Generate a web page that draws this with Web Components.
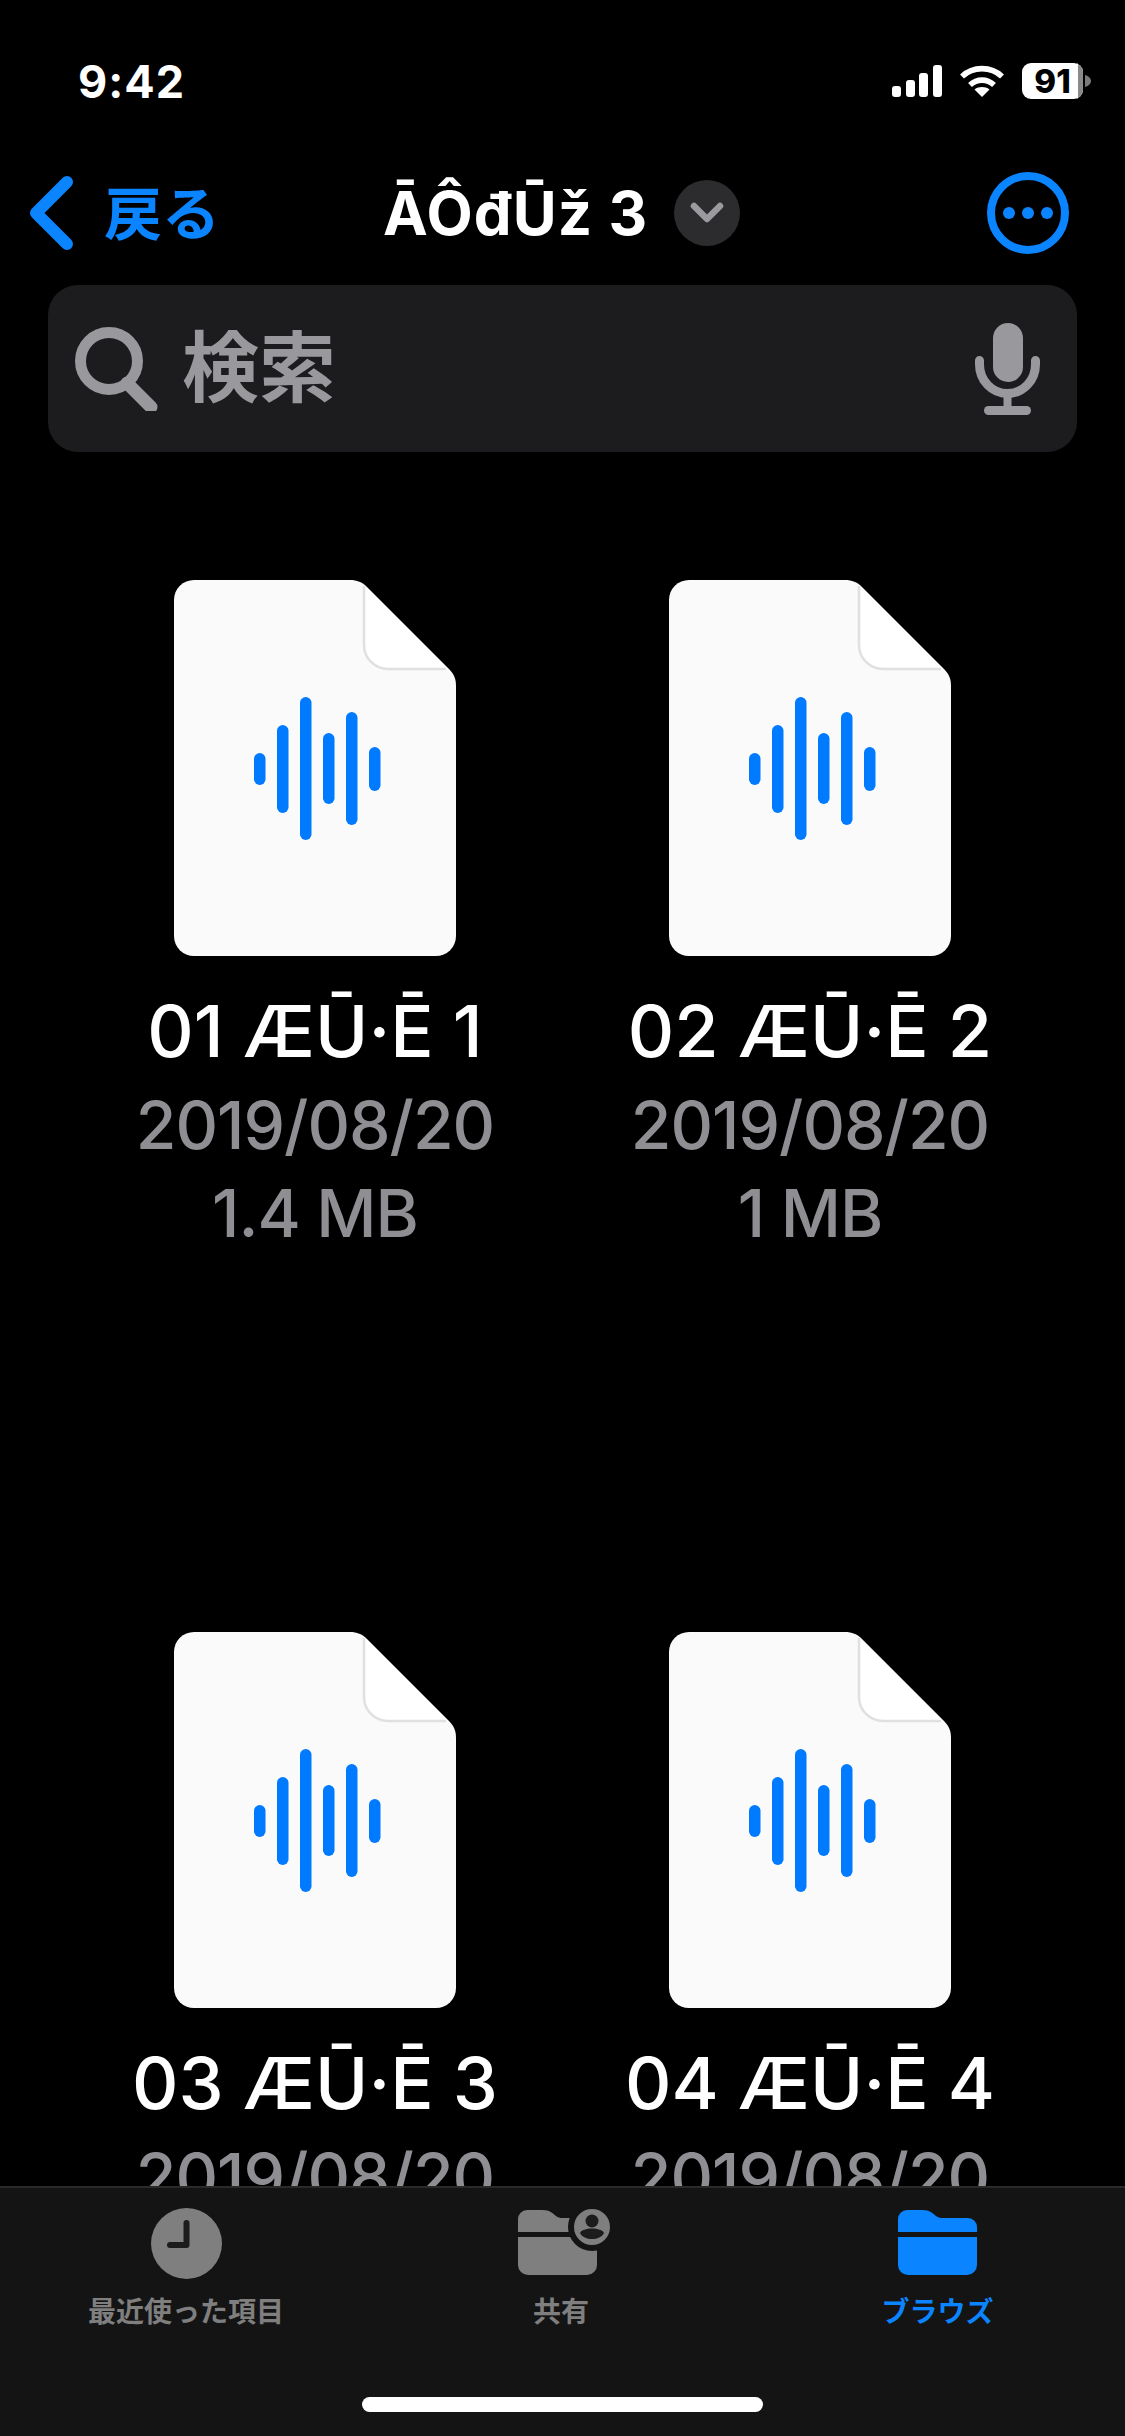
<!DOCTYPE html>
<html lang="ja">
<head>
<meta charset="UTF-8">
<title>Files</title>
<style>
  html, body { margin: 0; background: #000; }
</style>
</head>
<body>
<files-app>
  <status-bar slot="status" time="9:42" battery="91"></status-bar>
  <nav-bar slot="nav" back="戻る" heading="ĀÔđŪž 3"></nav-bar>
  <search-field slot="search" placeholder="検索"></search-field>
  <file-tile slot="files" name="01 ÆŪ·Ē 1" date="2019/08/20" size="1.4 MB"></file-tile>
  <file-tile slot="files" name="02 ÆŪ·Ē 2" date="2019/08/20" size="1 MB"></file-tile>
  <file-tile slot="files" name="03 ÆŪ·Ē 3" date="2019/08/20"></file-tile>
  <file-tile slot="files" name="04 ÆŪ·Ē 4" date="2019/08/20"></file-tile>
  <tab-bar slot="tabs"></tab-bar>
</files-app>

<script>
const FONT = `Inter, "Noto Sans CJK JP", sans-serif`;
const BLUE = '#0a84ff';

class FilesApp extends HTMLElement {
  constructor() {
    super();
    this.attachShadow({ mode: 'open' }).innerHTML = `
    <style>
      :host { display: flex; flex-direction: column; width: 1125px; height: 2436px; overflow: hidden; background: #000; font-family: ${FONT}; }
      .files { display: grid; flex: 1; min-height: 0; overflow: hidden; align-content: start;
        grid-template-columns: 495px 495px; grid-auto-rows: 1052px; padding: 128px 0 0 135px; }
    </style>
    <slot name="status"></slot>
    <slot name="nav"></slot>
    <slot name="search"></slot>
    <div class="files"><slot name="files"></slot></div>
    <slot name="tabs"></slot>`;
  }
}

class StatusBar extends HTMLElement {
  connectedCallback() {
    this.attachShadow({ mode: 'open' }).innerHTML = `
    <style>
      :host { display: flex; align-items: center; justify-content: space-between; height: 162px; box-sizing: border-box; padding: 0 34px 0 78px; color: #fff; }
      .time { font-size: 45px; font-weight: 700; letter-spacing: 1px; }
      .right { display: flex; align-items: center; gap: 17px; }
      .battery { position: relative; width: 69px; height: 36px; }
      svg { display: block; }
      .level { position: absolute; left: 0; top: 0; width: 61px; height: 36px; text-align: center; line-height: 37px; font-size: 33px; font-weight: 800; color: #000; }
    </style>
    <span class="time">${this.getAttribute('time')}</span>
    <div class="right">
      <svg width="50" height="32" viewBox="0 0 50 32" fill="#fff">
        <rect x="0" y="21" width="9" height="11" rx="3"/><rect x="14" y="15" width="9" height="17" rx="3"/>
        <rect x="27" y="8" width="9" height="24" rx="3"/><rect x="41" y="0" width="9" height="32" rx="3"/>
      </svg>
      <svg width="46" height="33" viewBox="0 0 46 33" fill="none" stroke="#fff" stroke-width="5.6">
        <path d="M3 11.500C14 1 32 1 43 11.500"/><path d="M11 20c7-6.500 17-6.500 24 0"/>
        <path d="M15.500 24.500 23 32l7.500-7.500c-4.500-3.200-10.500-3.200-15 0Z" fill="#fff" stroke="none"/>
      </svg>
      <div class="battery">
        <svg width="69" height="36" viewBox="0 0 69 36">
          <rect x="0" y="0" width="61" height="36" rx="9" fill="#fff"/>
          <path d="M56 0v36h-4 0a9 9 0 0 0 9-9V9a9 9 0 0 0-9-9Z" fill="#8a8a8a"/>
          <path d="M63 12c4 1 6 3.500 6 6s-2 5-6 6Z" fill="#7a7a7a"/>
        </svg>
        <span class="level">${this.getAttribute('battery')}</span>
      </div>
    </div>`;
  }
}

class NavBar extends HTMLElement {
  connectedCallback() {
    this.attachShadow({ mode: 'open' }).innerHTML = `
    <style>
      :host { display: grid; grid-template-columns: 353px auto 1fr; align-items: center; height: 123px; box-sizing: border-box; padding: 0 56px 22px 30px; color: #fff; }
      .back { display: flex; align-items: center; gap: 31px; color: ${BLUE}; font-size: 58px; font-weight: 700; }
      .back span { margin-top: -6px; }
      .mid { display: flex; align-items: center; gap: 26px; }
      h1 { margin: 0; font-size: 60px; font-weight: 700; letter-spacing: 1.1px; }
      .drop { display: flex; align-items: center; justify-content: center; width: 66px; height: 66px; border-radius: 50%; background: #2c2c2e; }
      .more { justify-self: end; display: flex; align-items: center; justify-content: center; gap: 7px; width: 82px; height: 82px; box-sizing: border-box; border: 8px solid ${BLUE}; border-radius: 50%; }
      .more i { width: 12px; height: 12px; border-radius: 50%; background: ${BLUE}; }
      svg { display: block; }
    </style>
    <div class="back">
      <svg width="43" height="74" viewBox="0 0 43 74" fill="none" stroke="${BLUE}" stroke-width="12" stroke-linecap="round" stroke-linejoin="round"><path d="M37 6 6 37l31 31"/></svg>
      <span>${this.getAttribute('back')}</span>
    </div>
    <div class="mid">
      <h1>${this.getAttribute('heading')}</h1>
      <span class="drop"><svg width="34" height="22" viewBox="0 0 34 22" fill="none" stroke="#9a9a9f" stroke-width="6.500" stroke-linecap="round" stroke-linejoin="round"><path d="m4 4 13 13L30 4"/></svg></span>
    </div>
    <div class="more"><i></i><i></i><i></i></div>`;
  }
}

class SearchField extends HTMLElement {
  connectedCallback() {
    this.attachShadow({ mode: 'open' }).innerHTML = `
    <style>
      :host { display: flex; align-items: center; height: 167px; margin: 0 48px; box-sizing: border-box; padding: 0 37px 0 27px; gap: 24px; background: #1c1c1e; border-radius: 30px; color: #98989d; }
      span { flex: 1; font-size: 77px; font-weight: 700; margin-top: -12px; }
      svg { display: block; }
    </style>
    <svg width="83" height="84" viewBox="0 0 83 84" fill="none" stroke="#98989d"><circle cx="34" cy="34" r="28.500" stroke-width="11"/><path d="m52 56 24 24" stroke-width="13" stroke-linecap="round"/></svg>
    <span>${this.getAttribute('placeholder')}</span>
    <svg width="65" height="92" viewBox="0 0 65 92" fill="none" stroke="#98989d" stroke-width="9" stroke-linecap="round">
      <rect x="18" y="0" width="30" height="59" rx="15" fill="#98989d" stroke="none"/>
      <path d="M4.500 37.500v4c0 16 12.500 29 28 29s28-13 28-29v-4"/>
      <path d="M32.500 70v15" stroke-width="8" stroke-linecap="butt"/>
      <rect x="9" y="83" width="47" height="9" rx="4.500" fill="#98989d" stroke="none"/>
    </svg>`;
  }
}

class FileTile extends HTMLElement {
  connectedCallback() {
    const size = this.getAttribute('size');
    this.attachShadow({ mode: 'open' }).innerHTML = `
    <style>
      :host { display: flex; flex-direction: column; align-items: center; width: 360px; }
      svg { display: block; flex: none; }
      .name { margin-top: 24px; color: #fff; font-size: 72px; font-weight: 500; line-height: 101px; white-space: nowrap; letter-spacing: 0; }
      .meta { color: #8e8e93; font-size: 66px; font-weight: 500; line-height: 88px; white-space: nowrap; letter-spacing: -1px; }
    </style>
    <svg width="282" height="376" viewBox="0 0 282 376">
      <path d="M20 0H176c7 0 12 2 17 7l82 82c5 5 7 10 7 17V356a20 20 0 0 1-20 20H20a20 20 0 0 1-20-20V20A20 20 0 0 1 20 0Z" fill="#fafafa"/>
      <path d="M190 5 277 92l-3-3H214a24 24 0 0 1-24-24Z" fill="#fff"/>
      <path d="M190 6V65a24 24 0 0 0 24 24H272" fill="none" stroke="#e0e0e0" stroke-width="2.500"/>
      <g fill="#007aff">
        <rect x="80" y="173" width="11.500" height="32" rx="5.750"/><rect x="103" y="145" width="11.500" height="88" rx="5.750"/>
        <rect x="126" y="117" width="11.500" height="143" rx="5.750"/><rect x="149" y="153" width="11.500" height="71" rx="5.750"/>
        <rect x="172" y="132" width="11.500" height="113" rx="5.750"/><rect x="195" y="167" width="11.500" height="44" rx="5.750"/>
      </g>
    </svg>
    <div class="name">${this.getAttribute('name')}</div>
    <div class="meta">${this.getAttribute('date')}</div>
    ${size ? `<div class="meta">${size}</div>` : ''}`;
  }
}

class TabBar extends HTMLElement {
  connectedCallback() {
    const item = (label, color, icon) => `<div class="tab" style="color:${color}">${icon}<span>${label}</span></div>`;
    const folder = (fill, width, dx, extra = '') => `<svg width="${width}" height="71" viewBox="0 0 ${width} 71">
      <g transform="translate(${dx} 2)" fill="${fill}">
        <path d="M0 22V9a9 9 0 0 1 9-9H24c5 0 8 1 11 3.500l3 2.500c2 1.500 4 2 6 2H70a9 9 0 0 1 9 9V22Z"/>
        <path d="M0 27H79V55a10 10 0 0 1-10 10H10A10 10 0 0 1 0 55Z"/>
      </g>${extra}</svg>`;
    this.attachShadow({ mode: 'open' }).innerHTML = `
    <style>
      :host { display: block; position: relative; flex: none; height: 250px; box-sizing: border-box; background: #141414; border-top: 2px solid #2a2a2a; }
      .tabs { display: grid; grid-template-columns: 372px 378px 375px; padding-top: 20px; }
      .tab { display: flex; flex-direction: column; align-items: center; gap: 16px; font-size: 28px; font-weight: 700; }
      .tab span { line-height: 34px; }
      svg { display: block; }
      .home { position: absolute; left: 362px; top: 209px; width: 401px; height: 15px; border-radius: 8px; background: #fff; }
    </style>
    <div class="tabs">
      ${item('最近使った項目', '#7f7f7f', `<svg width="71" height="71" viewBox="0 0 71 71"><circle cx="35.500" cy="35.500" r="35.500" fill="#7f7f7f"/><path d="M35.500 15V37H19" fill="none" stroke="#1c1c1c" stroke-width="6" stroke-linecap="round" stroke-linejoin="round"/></svg>`)}
      ${item('共有', '#7f7f7f', folder('#7f7f7f', 96, 3, `<circle cx="77" cy="19" r="21" fill="#7f7f7f" stroke="#141414" stroke-width="6"/><circle cx="77" cy="13" r="6.500" fill="#1c1c1c"/><path d="M65 25c2-6 22-6 24 0-4 8-20 8-24 0Z" fill="#1c1c1c"/>`).replace('<svg ', '<svg style="margin-left:4px" '))}
      ${item('ブラウズ', BLUE, folder(BLUE, 79, 0))}
    </div>
    <div class="home"></div>`;
  }
}

customElements.define('files-app', FilesApp);
customElements.define('status-bar', StatusBar);
customElements.define('nav-bar', NavBar);
customElements.define('search-field', SearchField);
customElements.define('file-tile', FileTile);
customElements.define('tab-bar', TabBar);
</script>
</body>
</html>
